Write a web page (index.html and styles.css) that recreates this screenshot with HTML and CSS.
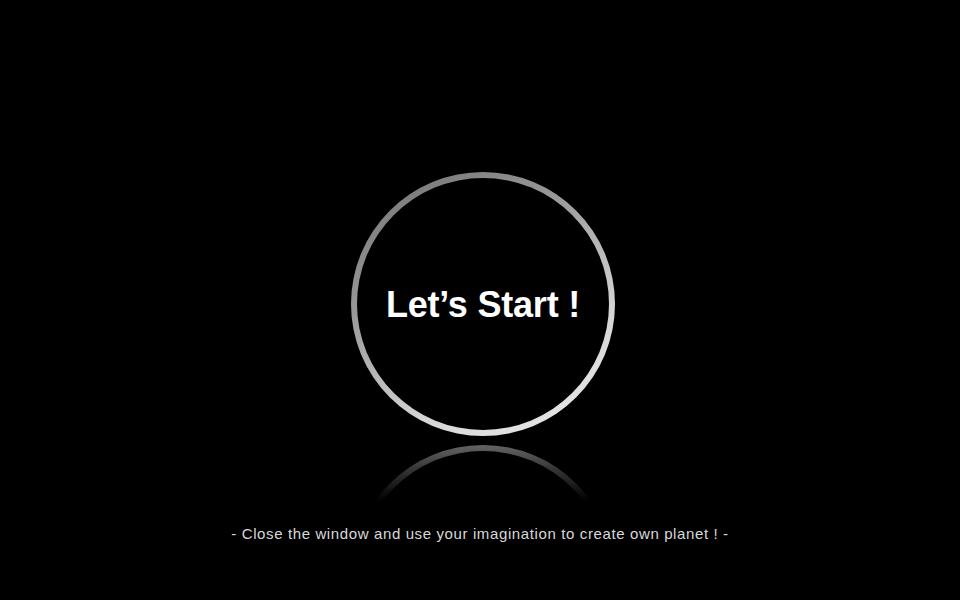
FILE: index.html
```html
<!DOCTYPE html>
<html lang="en">
<head>
<meta charset="utf-8">
<title>Let's Start</title>
<link rel="stylesheet" href="styles.css">
</head>
<body>
<main class="stage">
  <div class="ring">
    <span class="ring-label">Let’s Start !</span>
  </div>
  <div class="reflection" aria-hidden="true">
    <div class="ring ring-mirror"></div>
  </div>
  <p class="hint">- Close the window and use your imagination to create own planet ! -</p>
</main>
</body>
</html>
```

FILE: styles.css
```css
html, body {
  margin: 0;
  padding: 0;
  background: #000;
  height: 100%;
}

.stage {
  height: 600px;
  display: flex;
  flex-direction: column;
  align-items: center;
  padding-top: 172px;
  box-sizing: border-box;
  padding-left: 6px;
}

.ring {
  width: 264px;
  height: 264px;
  box-sizing: border-box;
  border-radius: 50%;
  border: 6px solid transparent;
  background:
    linear-gradient(#000, #000) padding-box,
    linear-gradient(150deg, #6e6e6e 0%, #9a9a9a 35%, #d6d6d6 70%, #ededed 100%) border-box;
  display: flex;
  align-items: center;
  justify-content: center;
}

.ring-label {
  font-family: "Liberation Sans", Arial, sans-serif;
  font-weight: 700;
  font-size: 36px;
  color: #fff;
  letter-spacing: -0.2px;
  margin-top: 2px;
}

.reflection {
  margin-top: 9px;
  height: 56px;
  overflow: hidden;
  -webkit-mask-image: linear-gradient(to bottom, rgba(0,0,0,0.42) 0%, rgba(0,0,0,0.22) 45%, rgba(0,0,0,0) 100%);
  mask-image: linear-gradient(to bottom, rgba(0,0,0,0.42) 0%, rgba(0,0,0,0.22) 45%, rgba(0,0,0,0) 100%);
}

.ring-mirror {
  background:
    linear-gradient(#000, #000) padding-box,
    linear-gradient(#eeeeee, #cccccc) border-box;
}

.hint {
  margin: 24px 0 0;
  padding-right: 6px;
  font-family: "Liberation Sans", Arial, sans-serif;
  font-size: 15px;
  line-height: 18px;
  color: #d8d8d8;
  letter-spacing: 0.62px;
}
```
